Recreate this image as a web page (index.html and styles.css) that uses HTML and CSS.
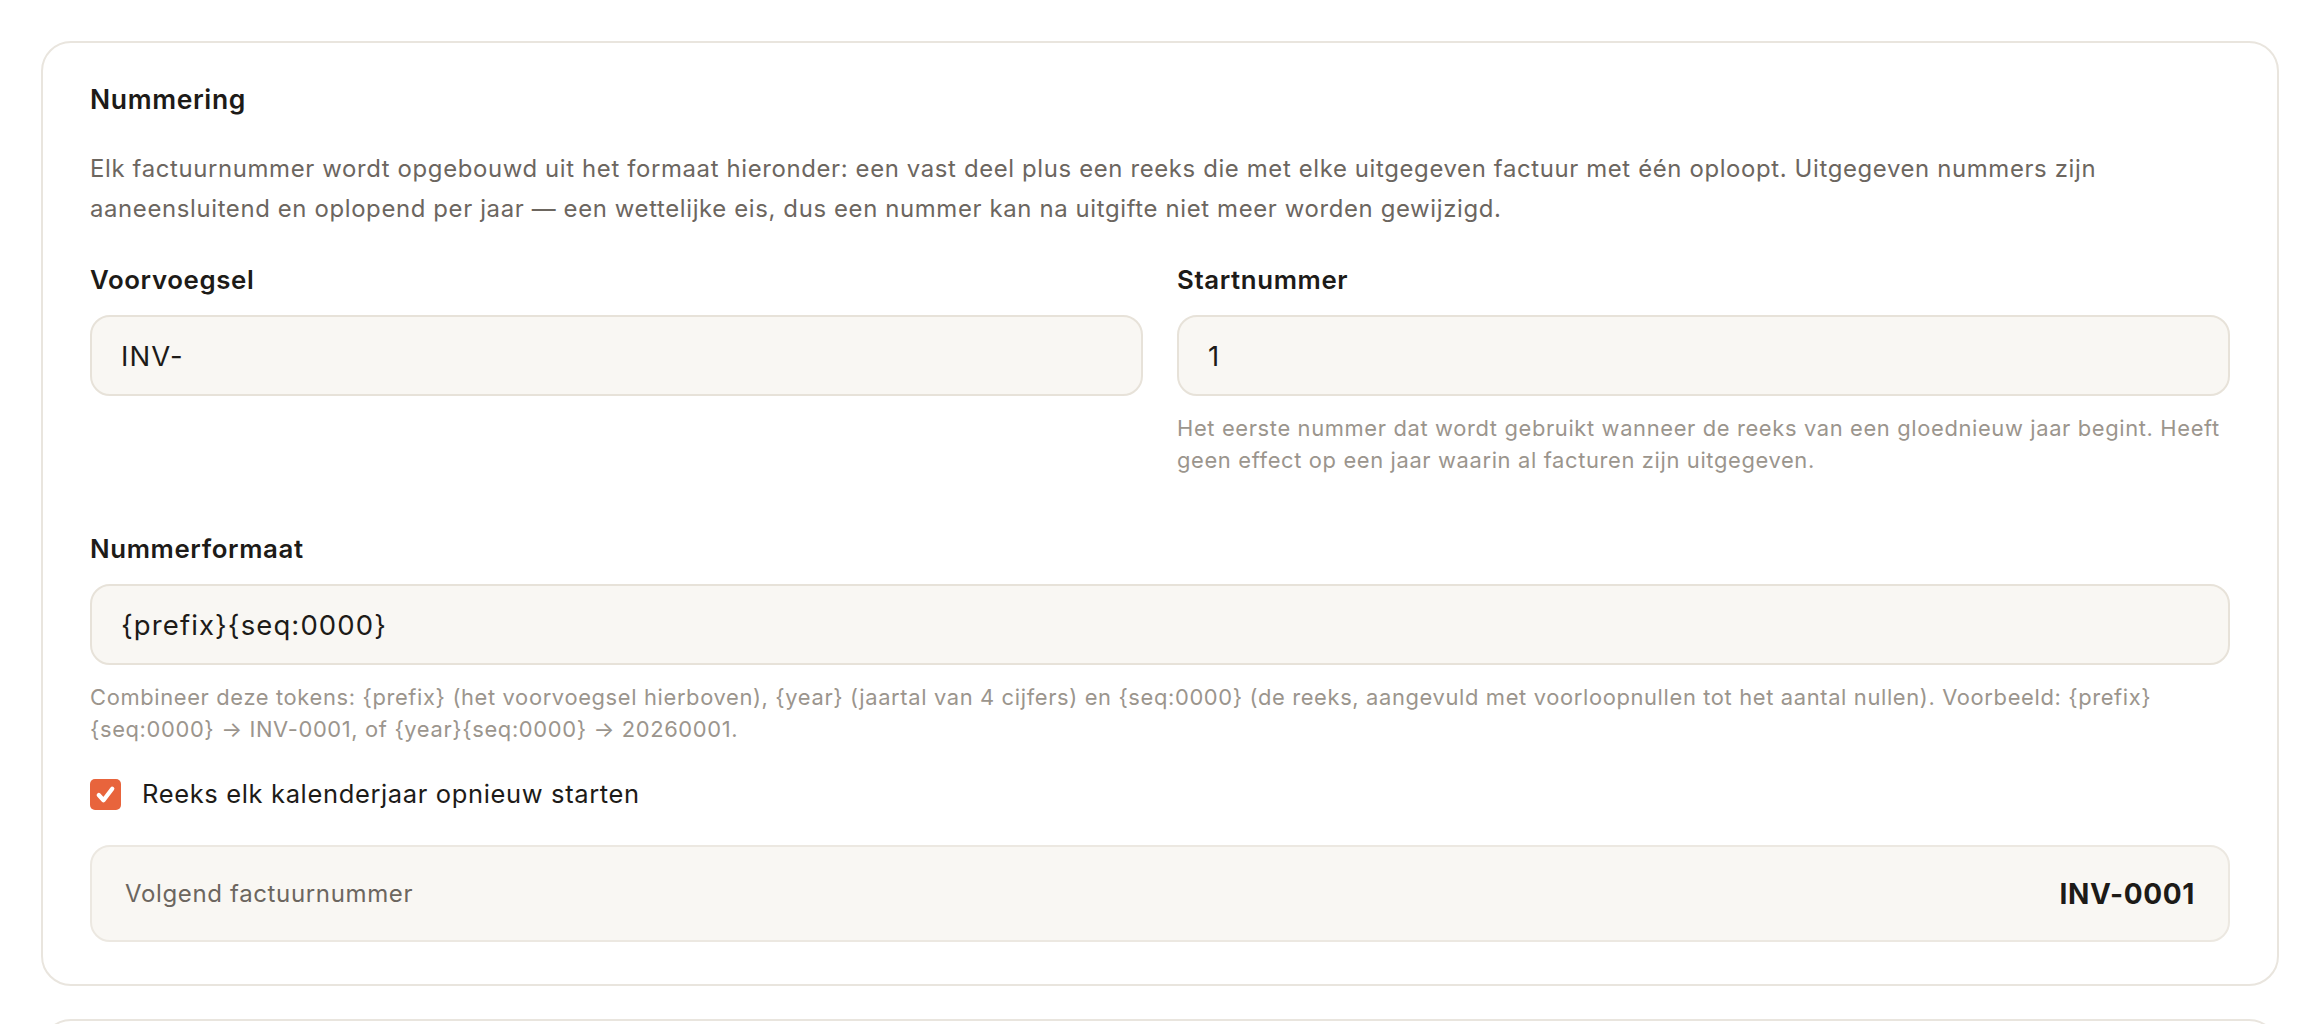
FILE: index.html
```html
<!DOCTYPE html>
<html lang="nl">
<head>
    <meta charset="UTF-8">
    <meta name="viewport" content="width=device-width, initial-scale=1.0">
    <title>Nummering</title>
    <link rel="stylesheet" href="styles.css">
</head>
<body>
    <div class="page">
        <section class="card">
            <h2 class="card-title">Nummering</h2>
            <p class="intro">
                Elk factuurnummer wordt opgebouwd uit het formaat hieronder: een vast deel plus een reeks die met elke uitgegeven factuur met één oploopt. Uitgegeven nummers zijn aaneensluitend en oplopend per jaar — een wettelijke eis, dus een nummer kan na uitgifte niet meer worden gewijzigd.
            </p>

            <div class="row">
                <div class="field">
                    <label for="prefix">Voorvoegsel</label>
                    <input type="text" id="prefix" value="INV-">
                </div>
                <div class="field">
                    <label for="start">Startnummer</label>
                    <input type="text" id="start" value="1">
                    <div class="hint">Het eerste nummer dat wordt gebruikt wanneer de reeks van een gloednieuw jaar begint. Heeft geen effect op een jaar waarin al facturen zijn uitgegeven.</div>
                </div>
            </div>

            <div class="field">
                <label for="format">Nummerformaat</label>
                <input type="text" id="format" value="{prefix}{seq:0000}">
                <div class="hint">Combineer deze tokens: {prefix} (het voorvoegsel hierboven), {year} (jaartal van 4 cijfers) en {seq:0000} (de reeks, aangevuld met voorloopnullen tot het aantal nullen). Voorbeeld: {prefix}{seq:0000} → INV-0001, of {year}{seq:0000} → 20260001.</div>
            </div>

            <label class="check">
                <span class="box">
                    <svg viewBox="0 0 20 20" width="25" height="25"><path d="M4.6 10.4l3.8 4.2 7-9.2" fill="none" stroke="#fff" stroke-width="3.4" stroke-linecap="round" stroke-linejoin="round"/></svg>
                </span>
                Reeks elk kalenderjaar opnieuw starten
            </label>

            <div class="next">
                <span class="next-label">Volgend factuurnummer</span>
                <span class="next-value">INV-0001</span>
            </div>
        </section>

        <section class="card card-next"></section>
    </div>
</body>
</html>
```

FILE: styles.css
```css
body {
    margin: 0;
    padding: 0;
    background: #ffffff;
    font-family: Inter, "Noto Sans", sans-serif;
    letter-spacing: 0.04em;
    color: #1d1b18;
}

.page {
    padding: 41px;
}

.card {
    background: #fff;
    border: 2px solid #e9e5de;
    border-radius: 30px;
    padding: 38px 47px 42px;
    display: flex;
    flex-direction: column;
    gap: 33px;
}

.card-next {
    margin-top: 33px;
    height: 200px;
}

.card-title {
    margin: 0;
    font-size: 26.5px;
    line-height: 36px;
    font-weight: 600;
}

.intro {
    margin: -1px 0 0;
    font-size: 23.9px;
    line-height: 40px;
    color: #6c665f;
}

.row {
    display: grid;
    grid-template-columns: 1fr 1fr;
    gap: 34px;
    margin-bottom: 22px;
}

.field {
    display: flex;
    flex-direction: column;
}

.field label {
    font-size: 25.8px;
    line-height: 36px;
    font-weight: 600;
    margin-bottom: 17px;
}

.field input {
    box-sizing: border-box;
    height: 81px;
    padding: 0 29px;
    border: 2px solid #e7e2d9;
    border-radius: 20px;
    background: #f9f7f3;
    font-family: inherit;
    font-size: 27.5px;
    letter-spacing: 0.04em;
    color: #1d1b18;
    outline: none;
}

.hint {
    margin-top: 16px;
    font-size: 21.9px;
    line-height: 32px;
    color: #9b958d;
}

.check {
    display: flex;
    align-items: center;
    gap: 21px;
    font-size: 25.5px;
    line-height: 36px;
    margin-top: -2px;
}

.box {
    width: 31px;
    height: 31px;
    border-radius: 5px;
    background: #e8643c;
    display: flex;
    align-items: center;
    justify-content: center;
}

.next {
    display: flex;
    justify-content: space-between;
    align-items: center;
    height: 97px;
    box-sizing: border-box;
    padding: 0 33px;
    border: 2px solid #ece8e1;
    border-radius: 20px;
    background: #f9f7f3;
    margin-top: 0;
}

.next-label {
    font-size: 24px;
    color: #6c665f;
}

.next-value {
    font-size: 28px;
    font-weight: 700;
}
```
